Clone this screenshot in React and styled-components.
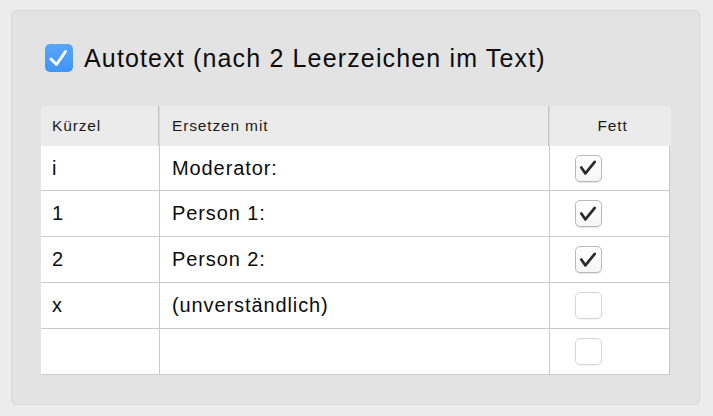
import React from "react";
import styled, { createGlobalStyle } from "styled-components";

const Global = createGlobalStyle`
  html, body { margin: 0; padding: 0; background: #ececec; }
  body { font-family: "Liberation Sans", Arial, sans-serif; color: #111; }
  * { box-sizing: border-box; }
`;

const Page = styled.div`
  width: 713px;
  height: 416px;
  padding: 10px 13px 11px 11px;
`;

const Panel = styled.div`
  width: 689px;
  height: 395px;
  background: #e3e3e3;
  border: 1px solid #d8d8d8;
  border-radius: 5px;
  padding: 33px 29px 0 29px;
`;

const TitleRow = styled.label`
  display: flex;
  align-items: center;
  gap: 11px;
  padding-left: 4px;
  height: 28px;
`;

const BlueBox = styled.span`
  width: 28px;
  height: 28px;
  border-radius: 5px;
  background: linear-gradient(#58a7f8, #3f95f5);
  display: flex;
  align-items: center;
  justify-content: center;
  flex: none;
`;

const Title = styled.span`
  font-size: 25px;
  letter-spacing: 1.15px;
  line-height: 28px;
  color: #0c0c0c;
`;

const Table = styled.div`
  margin-top: 34px;
  width: 630px;
`;

const HeaderRow = styled.div`
  display: grid;
  grid-template-columns: 119px 390px 1fr;
  height: 40px;
  background: #ebebeb;
`;

const HeadCell = styled.div`
  display: flex;
  align-items: center;
  justify-content: ${(p) => (p.$center ? "center" : "flex-start")};
  padding-left: ${(p) => (p.$center ? "4px" : p.$pad || "11px")};
  font-size: 15.5px;
  letter-spacing: 0.85px;
  color: #1a1a1a;
  border-right: ${(p) => (p.$last ? "none" : "1px solid #dadada")};
  box-shadow: ${(p) => (p.$last ? "none" : "inset -1px 0 0 #c4c4c4")};
`;

const Body = styled.div`
  width: 629px;
  background: #fff;
  border-right: 1px solid #c9c9c9;
`;

const Row = styled.div`
  display: grid;
  grid-template-columns: 119px 390px 1fr;
  height: ${(p) => (p.$first ? "45px" : "46px")};
  border-bottom: 1px solid ${(p) => (p.$last ? "#cdcdcd" : "#c9c9c9")};
`;

const Cell = styled.div`
  display: flex;
  align-items: center;
  padding-left: ${(p) => p.$pad || "11px"};
  font-size: 20px;
  letter-spacing: 0.9px;
  color: #0c0c0c;
  border-right: ${(p) => (p.$last ? "none" : "1px solid #c9c9c9")};
`;

const Check = styled.span`
  width: 27px;
  height: 27px;
  border-radius: 5px;
  border: 1px solid ${(p) => (p.$on ? "#b9b9b9" : "#d6d6d6")};
  background: ${(p) => (p.$on ? "linear-gradient(#ffffff, #f6f6f6)" : "#fff")};
  box-shadow: 0 1px 1px rgba(0, 0, 0, ${(p) => (p.$on ? 0.1 : 0.04)});
  display: flex;
  align-items: center;
  justify-content: center;
`;

const rows = [
  { k: "i", v: "Moderator:", b: true },
  { k: "1", v: "Person 1:", b: true },
  { k: "2", v: "Person 2:", b: true },
  { k: "x", v: "(unverständlich)", b: false },
  { k: "", v: "", b: false },
];

function DarkTick() {
  return (
    <svg width="27" height="27" viewBox="0 0 27 27" style={{ marginLeft: -1, marginTop: -1 }}>
      <path d="M6.5 13.5 L10.8 19.6 L20.5 7.6" fill="none" stroke="#2a2a2a" strokeWidth="2.8" strokeLinecap="round" strokeLinejoin="round" />
    </svg>
  );
}

function WhiteTick() {
  return (
    <svg width="28" height="28" viewBox="0 0 28 28">
      <path d="M6 15 L11.5 20.5 L20.5 7.5" fill="none" stroke="#fff" strokeWidth="3" strokeLinecap="round" strokeLinejoin="round" />
    </svg>
  );
}

export default function App() {
  return (
    <>
      <Global />
      <Page>
        <Panel>
          <TitleRow>
            <BlueBox>
              <WhiteTick />
            </BlueBox>
            <Title>Autotext (nach 2 Leerzeichen im Text)</Title>
          </TitleRow>
          <Table>
            <HeaderRow>
              <HeadCell>Kürzel</HeadCell>
              <HeadCell $pad="12px">Ersetzen mit</HeadCell>
              <HeadCell $center $last>Fett</HeadCell>
            </HeaderRow>
            <Body>
              {rows.map((r, i) => (
                <Row key={i} $first={i === 0} $last={i === rows.length - 1}>
                  <Cell>{r.k}</Cell>
                  <Cell $pad="12px">{r.v}</Cell>
                  <Cell $pad="25px" $last>
                    <Check $on={r.b}>{r.b && <DarkTick />}</Check>
                  </Cell>
                </Row>
              ))}
            </Body>
          </Table>
        </Panel>
      </Page>
    </>
  );
}
